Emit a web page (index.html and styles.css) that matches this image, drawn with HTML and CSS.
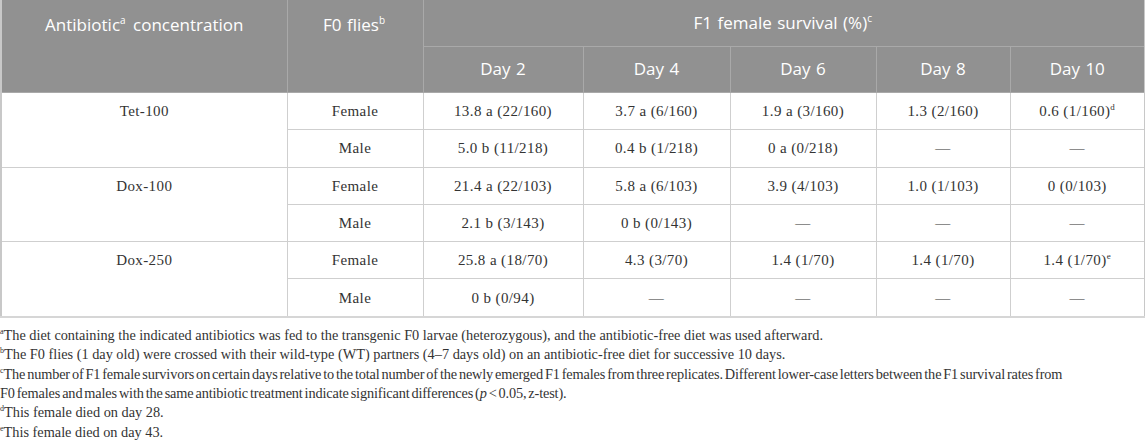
FILE: index.html
```html
<!DOCTYPE html>
<html>
	<head>
		<meta charset="utf-8" />
		<title>F1 female survival</title>
		<link rel="stylesheet" href="styles.css">
	</head>
	<body>
		<table class="survival">
			<colgroup>
				<col class="c-anti">
				<col class="c-flies">
				<col class="c-d2">
				<col class="c-d4">
				<col class="c-d6">
				<col class="c-d8">
				<col class="c-d10">
			</colgroup>
			<thead>
				<tr>
					<th rowspan="2">Antibiotic<sup>a</sup> concentration</th>
					<th rowspan="2">F0 flies<sup>b</sup></th>
					<th colspan="5">F1 female survival (%)<sup>c</sup></th>
				</tr>
				<tr>
					<th>Day 2</th>
					<th>Day 4</th>
					<th>Day 6</th>
					<th>Day 8</th>
					<th>Day 10</th>
				</tr>
			</thead>
			<tbody>
				<tr>
					<td rowspan="2">Tet-100</td>
					<td>Female</td>
					<td>13.8 a (22/160)</td>
					<td>3.7 a (6/160)</td>
					<td>1.9 a (3/160)</td>
					<td>1.3 (2/160)</td>
					<td>0.6 (1/160)<sup>d</sup></td>
				</tr>
				<tr>
					<td>Male</td>
					<td>5.0 b (11/218)</td>
					<td>0.4 b (1/218)</td>
					<td>0 a (0/218)</td>
					<td>—</td>
					<td>—</td>
				</tr>
				<tr>
					<td rowspan="2">Dox-100</td>
					<td>Female</td>
					<td>21.4 a (22/103)</td>
					<td>5.8 a (6/103)</td>
					<td>3.9 (4/103)</td>
					<td>1.0 (1/103)</td>
					<td>0 (0/103)</td>
				</tr>
				<tr>
					<td>Male</td>
					<td>2.1 b (3/143)</td>
					<td>0 b (0/143)</td>
					<td>—</td>
					<td>—</td>
					<td>—</td>
				</tr>
				<tr>
					<td rowspan="2">Dox-250</td>
					<td>Female</td>
					<td>25.8 a (18/70)</td>
					<td>4.3 (3/70)</td>
					<td>1.4 (1/70)</td>
					<td>1.4 (1/70)</td>
					<td>1.4 (1/70)<sup>e</sup></td>
				</tr>
				<tr>
					<td>Male</td>
					<td>0 b (0/94)</td>
					<td>—</td>
					<td>—</td>
					<td>—</td>
					<td>—</td>
				</tr>
			</tbody>
		</table>
		<div class="notes">
			<p><sup>a</sup>The diet containing the indicated antibiotics was fed to the transgenic F0 larvae (heterozygous), and the antibiotic-free diet was used afterward.</p>
			<p><sup>b</sup>The F0 flies (1 day old) were crossed with their wild-type (WT) partners (4–7 days old) on an antibiotic-free diet for successive 10 days.</p>
			<p class="tight"><sup>c</sup>The number of F1 female survivors on certain days relative to the total number of the newly emerged F1 females from three replicates. Different lower-case letters between the F1 survival rates from F0 females and males with the same antibiotic treatment indicate significant differences (<i>p</i> &lt; 0.05, z-test).</p>
			<p><sup>d</sup>This female died on day 28.</p>
			<p><sup>e</sup>This female died on day 43.</p>
		</div>
	</body>
</html>
```

FILE: styles.css
```css
*{margin: 0;padding: 0;}
body{background-color: #fff;
color: #333;
}
.survival{width: 1144px;
border-collapse: collapse;
table-layout: fixed;
border-left: 2px solid #c8c8c8;
border-right: 2px solid #c8c8c8;
border-bottom: 2px solid #d6d6d6;
}
.c-anti{width: 286px;}
.c-flies{width: 136px;}
.c-d2{width: 160px;}
.c-d4{width: 147px;}
.c-d6{width: 146px;}
.c-d8{width: 134px;}
.c-d10{width: 135px;}
.survival th{background-color: #919191;
color: #fff;
font-family: "Open Sans", sans-serif;
font-weight: normal;
font-size: 17px;
word-spacing: 1px;
line-height: 22px;
height: 45.5px;
padding: 0 8px;
vertical-align: middle;
border: 1px solid #a9a9a9;
border-top: none;
}
.survival thead tr:first-child th[rowspan]{vertical-align: top;
padding-top: 14px;
}
.survival th sup{font-size: 10px;
vertical-align: 7px;
line-height: 0;
margin-right: 2px;
}
.survival td{font-family: "Liberation Serif", serif;
font-size: 15px;
letter-spacing: 0.4px;
line-height: 20px;
height: 36.3px;
padding: 0 8px;
text-align: center;
vertical-align: middle;
border: 1px solid #cfcfcf;
color: #333;
}
.survival td[rowspan]{vertical-align: top;
padding-top: 8px;
}
.survival td sup{font-size: 9px;
vertical-align: 6px;
line-height: 0;
}
.notes{width: 1072px;
padding-top: 8px;
font-family: "Liberation Serif", serif;
font-size: 14.3px;
line-height: 19.4px;
color: #333;
}
/* 这一条比其他行排得紧 */
.notes .tight{letter-spacing: -0.14px;
word-spacing: -1.5px;
}
.notes sup{font-size: 8px;
vertical-align: 6px;
line-height: 0;
}
```
